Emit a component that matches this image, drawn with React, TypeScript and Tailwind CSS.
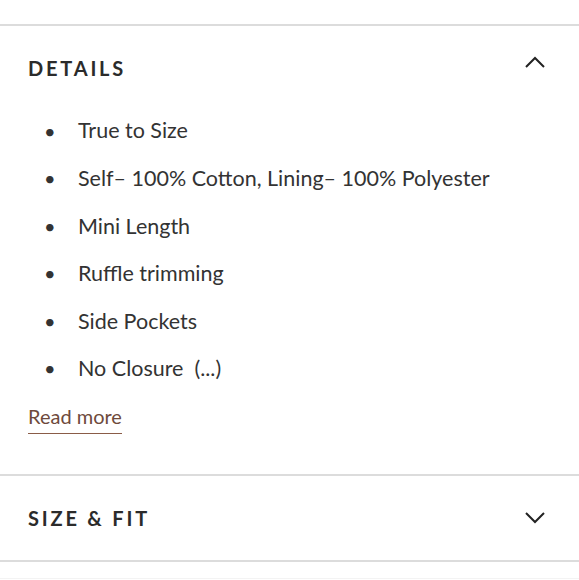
const items = [
  "True to Size",
  "Self– 100% Cotton, Lining– 100% Polyester",
  "Mini Length",
  "Ruffle trimming",
  "Side Pockets",
  "No Closure  (...)",
];

function Chevron({ up }: { up?: boolean }) {
  return (
    <svg width="20" height="12" viewBox="0 0 20 12" fill="none" stroke="#222" strokeWidth="2" className={up ? "mb-[12px]" : ""}>
      <polyline points={up ? "1,11 10,2 19,11" : "1,1 10,10 19,1"} />
    </svg>
  );
}

export default function App() {
  return (
    <div className="w-[579px] h-[580px] overflow-hidden bg-white text-[#333] font-['Lato',_sans-serif]">
      <div className="h-6" />
      <div className="border-t-2 border-[#dcdcdc]">
        <div className="h-[84px] flex items-center justify-between pl-7 pr-[34px]">
          <h3 className="text-[20px] font-bold tracking-[0.14em] text-[#2b2b2b]">DETAILS</h3>
          <Chevron up />
        </div>
        <ul className="pl-7 pr-4 pt-[7px] flex flex-col gap-[20.6px]">
          {items.map(it => (
            <li key={it} className="flex items-center h-[27px] text-[21.5px] text-[#333]">
              <span className="w-[50px] pl-4 text-[20px]">•</span>
              <span className="whitespace-pre">{it}</span>
            </li>
          ))}
        </ul>
        <div className="pl-7 pt-[20px] pb-[40px]">
          <a className="inline-block text-[20px] text-[#6e4a3c] border-b-[1.5px] border-[#8a5c48] leading-[28px] pb-[3px]">Read more</a>
        </div>
      </div>
      <div className="border-t-2 border-[#dcdcdc]">
        <div className="h-[84px] flex items-center justify-between pl-7 pr-[34px]">
          <h3 className="text-[20px] font-bold tracking-[0.14em] text-[#2b2b2b]">SIZE &amp; FIT</h3>
          <Chevron />
        </div>
      </div>
      <div className="border-t-2 border-[#dcdcdc] h-[18px]" />
      <div className="border-t border-[#f3f3f3]" />
    </div>
  );
}
